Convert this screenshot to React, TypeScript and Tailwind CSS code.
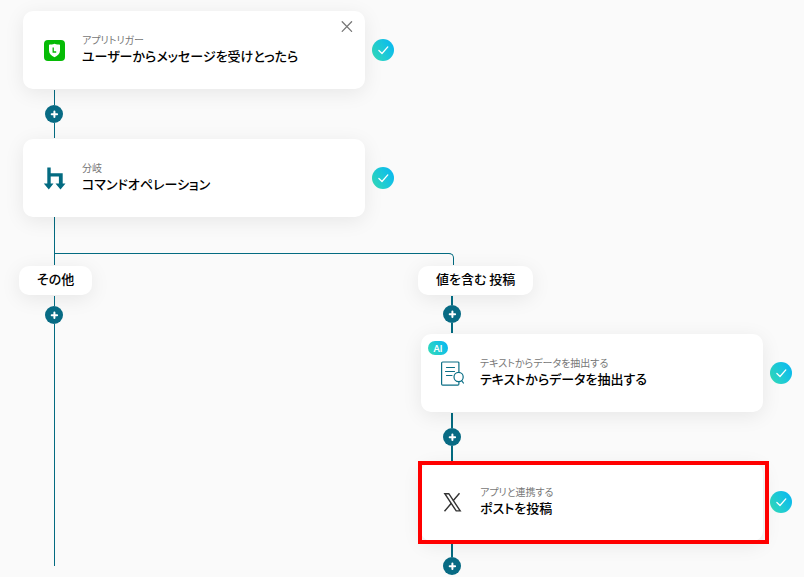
import type { ReactNode } from "react";

function Connector({ lines, className }: { lines: [string, string]; className: string }) {
  return (
    <div className={`flex w-[62px] flex-col items-center ${className}`}>
      <span className={`bg-[#036b81] ${lines[0]}`} />
      <button
        type="button"
        aria-label="ステップを追加"
        className="flex size-[18px] shrink-0 items-center justify-center rounded-full bg-[#086b84]"
      >
        <svg viewBox="0 0 18 18" className="size-[18px]" stroke="#fff" strokeWidth="2" strokeLinecap="round">
          <path d="M9.4 6.5v5.4M6.700 9.200h5.400" />
        </svg>
      </button>
      <span className={`bg-[#036b81] ${lines[1]}`} />
    </div>
  );
}

function Done() {
  return (
    <span className="flex size-[22px] shrink-0 items-center justify-center rounded-full bg-linear-60 from-[#35dcb4] to-[#08b4f5]">
      <svg viewBox="0 0 22 22" className="size-[22px]" fill="none" stroke="#fff" strokeWidth="1.3" strokeLinecap="round" strokeLinejoin="round">
        <path d="M6.900 11.500l3.100 3 5.800-6.600" />
      </svg>
    </span>
  );
}

function Step({
  icon,
  label,
  title,
  ai,
  closable,
  highlighted,
}: {
  icon: ReactNode;
  label: string;
  title: string;
  ai?: boolean;
  closable?: boolean;
  highlighted?: boolean;
}) {
  return (
    <div className="flex items-center gap-[7px]">
      <article className="relative flex h-[78px] w-[342px] shrink-0 items-center gap-4 rounded-[10px] bg-white pl-[19px] shadow-[0_4px_20px_rgba(0,0,0,0.08)]">
        <span className="flex size-6 shrink-0 items-center justify-center">{icon}</span>
        <div className="pb-[2px]">
          <p className="text-[10px] leading-[14px] text-[#777]">{label}</p>
          <h2 className="text-[13px] leading-[18px] font-medium text-black">{title}</h2>
        </div>
        {ai && (
          <span className="absolute top-[7px] left-[7px] flex h-[14px] w-5 items-center justify-center rounded-full bg-linear-60 from-[#35dcb4] to-[#08b4f5] font-['Lato','Noto_Sans',sans-serif] text-[9px] leading-none font-bold text-white">
            AI
          </span>
        )}
        {closable && (
          <button type="button" aria-label="閉じる" className="absolute top-2 right-[10px] flex size-4 items-center justify-center">
            <svg viewBox="0 0 16 16" className="size-4" fill="none" stroke="#777" strokeWidth="1.3" strokeLinecap="round">
              <path d="M3.200 2.800l9.400 9.600M12.600 2.800l-9.400 9.600" />
            </svg>
          </button>
        )}
        {highlighted && (
          <span className="pointer-events-none absolute -top-[2px] -right-[6px] -bottom-[3px] -left-[3px] border-4 border-[#ff0000]" />
        )}
      </article>
      <Done />
    </div>
  );
}

function BranchLabel({ className, children }: { className: string; children: ReactNode }) {
  return (
    <h3
      className={`flex h-[29px] w-fit items-center rounded-[10px] bg-white px-[18px] pb-[3px] text-[13px] leading-[18px] font-medium whitespace-nowrap text-black shadow-[0_4px_20px_rgba(0,0,0,0.08)] ${className}`}
    >
      {children}
    </h3>
  );
}

function ShieldIcon() {
  return (
    <svg viewBox="0 0 24 24" className="size-6 shrink-0">
      <rect x="2" y="2" width="21" height="21" rx="4" fill="#06bb06" />
      <path d="M12.500 5.800c2 .8 3.800.9 5.500.9v5.800c0 3.200-2.300 5.200-5.500 6.700-3.200-1.500-5.500-3.500-5.500-6.700V6.700c1.700 0 3.500-.1 5.500-.9z" fill="#fff" />
      <path d="M11.200 9.400v4.600h3" fill="none" stroke="#06bb06" strokeWidth="1.300" />
    </svg>
  );
}

function BranchIcon() {
  return (
    <svg viewBox="0 0 24 24" className="size-6 shrink-0" fill="#036b81">
      <path d="M5.300 1.500h3.400v5.700h12V17.500h2.800L18.500 23.500l-5-6h3.400v-7H8.700v7h2.800L6.800 23.500l-5-6h3.500z" />
    </svg>
  );
}

function ExtractIcon() {
  return (
    <svg viewBox="0 0 24 26" className="h-[26px] w-6 shrink-0" fill="none" stroke="#0b6f86" strokeWidth="1.200" strokeLinecap="round">
      <path d="M18.900 11.500V3.100c0-.7-.4-1.100-1.100-1.100H2.700c-.7 0-1.100.4-1.100 1.100v21c0 .7.400 1.100 1.100 1.100h15.100c.7 0 1.100-.4 1.100-1.100v-2" />
      <path d="M6.500 7.500h8M5.500 11.500h9M6.500 15.500h5.500" />
      <circle cx="18.600" cy="17" r="4.600" fill="#fff" />
      <path d="M21.800 20.800l1.600 2.200" />
    </svg>
  );
}

function XLogo() {
  return (
    <svg viewBox="0 0 24 24" className="size-6 shrink-0" fill="none" stroke="#333" strokeWidth="1.400">
      <path d="M4.800 3.700h4l11.400 17.200h-4z" />
      <path d="M19.500 3.200l-6.400 7.500M11.300 13.200L4.500 21.300" />
    </svg>
  );
}

export default function App() {
  return (
    <main
      lang="ja"
      className="min-h-screen overflow-hidden bg-[#fafafa] pt-[11px] pl-[23px] font-['Noto_Sans_CJK_JP',sans-serif] [font-feature-settings:'palt']"
    >
      <Step icon={<ShieldIcon />} label="アプリトリガー" title="ユーザーからメッセージを受けとったら" closable />
      <Connector className="py-px" lines={["h-[15px] w-px", "h-[15px] w-px"]} />
      <Step icon={<BranchIcon />} label="分岐" title="コマンドオペレーション" />

      <div className="ml-[31px] h-9 w-px bg-[#036b81]" />
      <div className="ml-[31px] h-3 w-[400px] rounded-tr-[5px] border-t border-r border-l border-[#036b81]" />

      <div className="flex gap-[336px] pt-px">
        <section className="w-[62px] shrink-0">
          <BranchLabel className="-ml-1">その他</BranchLabel>
          <Connector className="pt-px" lines={["h-[10px] w-px", "h-[242px] w-px"]} />
        </section>

        <section className="shrink-0">
          <BranchLabel className="-ml-[3px]">値を含む 投稿</BranchLabel>
          <Connector className="py-px" lines={["h-[9px] w-[2px]", "h-[10px] w-[2px]"]} />
          <Step icon={<ExtractIcon />} label="テキストからデータを抽出する" title="テキストからデータを抽出する" ai />
          <Connector className="py-px" lines={["h-[15px] w-[2px]", "h-4 w-[2px]"]} />
          <Step icon={<XLogo />} label="アプリと連携する" title="ポストを投稿" highlighted />
          <Connector className="pt-[3px]" lines={["h-[13px] w-[2px]", "h-0 w-[2px]"]} />
        </section>
      </div>
    </main>
  );
}
